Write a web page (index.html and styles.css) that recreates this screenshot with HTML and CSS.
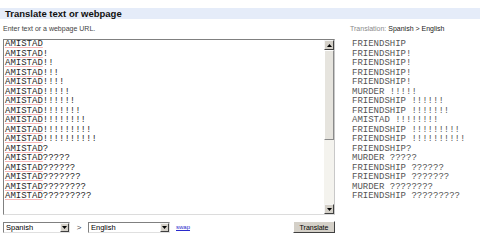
FILE: index.html
```html
<!DOCTYPE html>
<html>
<head>
  <title>Translate text or webpage</title>
  <link rel="stylesheet" href="styles.css">
</head>
<body>
  <div class="header">Translate text or webpage</div>

  <div class="main">
    <div class="source-col">
      <div class="hint">Enter text or a webpage URL.</div>

      <div class="source-box">
        <div class="source-text">
          <div><span class="misspelt">AMISTAD</span></div>
          <div><span class="misspelt">AMISTAD</span>!</div>
          <div><span class="misspelt">AMISTAD</span>!!</div>
          <div><span class="misspelt">AMISTAD</span>!!!</div>
          <div><span class="misspelt">AMISTAD</span>!!!!</div>
          <div><span class="misspelt">AMISTAD</span>!!!!!</div>
          <div><span class="misspelt">AMISTAD</span>!!!!!!</div>
          <div><span class="misspelt">AMISTAD</span>!!!!!!!</div>
          <div><span class="misspelt">AMISTAD</span>!!!!!!!!</div>
          <div><span class="misspelt">AMISTAD</span>!!!!!!!!!</div>
          <div><span class="misspelt">AMISTAD</span>!!!!!!!!!!</div>
          <div><span class="misspelt">AMISTAD</span>?</div>
          <div><span class="misspelt">AMISTAD</span>?????</div>
          <div><span class="misspelt">AMISTAD</span>??????</div>
          <div><span class="misspelt">AMISTAD</span>???????</div>
          <div><span class="misspelt">AMISTAD</span>????????</div>
          <div><span class="misspelt">AMISTAD</span>?????????</div>
        </div>
        <div class="scrollbar">
          <div class="scroll-btn">
            <svg width="5" height="3" viewBox="0 0 5 3"><path d="M2.5 0L5 3H0z" fill="#000"/></svg>
          </div>
          <div class="scroll-thumb"></div>
          <div class="scroll-track"></div>
          <div class="scroll-btn">
            <svg width="5" height="3" viewBox="0 0 5 3"><path d="M0 0H5L2.5 3z" fill="#000"/></svg>
          </div>
        </div>
      </div>

      <div class="controls">
        <div class="select select-from">
          <span class="select-value">Spanish</span>
          <span class="select-arrow">
            <svg width="5" height="3" viewBox="0 0 5 3"><path d="M0 0H5L2.5 3z" fill="#000"/></svg>
          </span>
        </div>
        <span class="arrow-sep">&gt;</span>
        <div class="select select-to">
          <span class="select-value">English</span>
          <span class="select-arrow">
            <svg width="5" height="3" viewBox="0 0 5 3"><path d="M0 0H5L2.5 3z" fill="#000"/></svg>
          </span>
        </div>
        <a class="swap" href="#">swap</a>
        <button class="translate-button">Translate</button>
      </div>
    </div>

    <div class="result-col">
      <div class="trans-label"><span class="muted">Translation:</span> Spanish &gt; English</div>
      <div class="result-text">
        <div>FRIENDSHIP</div>
        <div>FRIENDSHIP!</div>
        <div>FRIENDSHIP!</div>
        <div>FRIENDSHIP!</div>
        <div>FRIENDSHIP!</div>
        <div>MURDER !!!!!</div>
        <div>FRIENDSHIP !!!!!!</div>
        <div>FRIENDSHIP !!!!!!!</div>
        <div>AMISTAD !!!!!!!!</div>
        <div>FRIENDSHIP !!!!!!!!!</div>
        <div>FRIENDSHIP !!!!!!!!!!</div>
        <div>FRIENDSHIP?</div>
        <div>MURDER ?????</div>
        <div>FRIENDSHIP ??????</div>
        <div>FRIENDSHIP ???????</div>
        <div>MURDER ????????</div>
        <div>FRIENDSHIP ?????????</div>
      </div>
    </div>
  </div>
</body>
</html>
```

FILE: styles.css
```css
:root {
  --band: #e5ecf9;
  --text: #222222;
  --muted: #8a8a8a;
  --face: #d4d0c8;
  --mono: 'Liberation Mono', 'DejaVu Sans Mono', monospace;
  --font: 'Liberation Sans', Arial, sans-serif;
}

* {
  box-sizing: border-box;
  margin: 0;
  padding: 0;
}

body {
  width: 480px;
  height: 249px;
  overflow: hidden;
  background: #ffffff;
  font-family: var(--font);
  color: var(--text);
}

.header {
  margin-top: 8px;
  height: 11px;
  line-height: 11px;
  padding-left: 5px;
  background: var(--band);
  font-size: 9.5px;
  font-weight: 700;
  color: #111111;
}

.main {
  display: flex;
  align-items: flex-start;
}

.source-col {
  width: 332px;
  margin-left: 3px;
}

.hint,
.trans-label {
  margin-top: 6px;
  height: 8px;
  line-height: 8px;
  font-size: 7px;
  color: #444444;
  white-space: nowrap;
}

.trans-label {
  color: #222222;
}

.source-box {
  display: flex;
  margin-top: 6px;
  height: 176px;
  border: 1px solid #808080;
  border-right-color: #c8c8c8;
  border-bottom-color: #dcdcdc;
}

.source-text {
  flex: 1;
  padding-left: 1px;
  font-family: var(--mono);
  font-size: 9px;
  line-height: 9.5px;
  color: #2a2a2a;
}

.source-text div,
.result-text div {
  height: 9.5px;
  white-space: pre;
}

.misspelt {
  text-decoration: underline;
  text-decoration-color: #f6b8b8;
  text-underline-offset: 1px;
}

/* Classic scrollbar */
.scrollbar {
  display: flex;
  flex-direction: column;
  width: 10px;
  background: #f4f3ee;
}

.scroll-btn {
  display: flex;
  align-items: center;
  justify-content: center;
  height: 10px;
  background: var(--face);
  border: 1px solid;
  border-color: #f4f4f4 #404040 #404040 #f4f4f4;
}

.scroll-thumb {
  height: 90px;
  background: #e6e4de;
  border: 1px solid;
  border-color: #ffffff #8a8a8a #8a8a8a #ffffff;
}

.scroll-track {
  flex: 1;
}

.controls {
  display: flex;
  align-items: center;
  margin-top: 6px;
  height: 12px;
}

.select {
  display: flex;
  align-items: center;
  height: 11px;
  border: 1px solid;
  border-color: #808080 #e0e0e0 #e0e0e0 #808080;
  background: #ffffff;
}

.select-from {
  width: 67px;
}

.select-to {
  width: 82px;
}

.select-value {
  flex: 1;
  padding-left: 2px;
  font-size: 7.5px;
  line-height: 9px;
  color: #000000;
}

.select-arrow {
  display: flex;
  align-items: center;
  justify-content: center;
  width: 9px;
  height: 9px;
  background: var(--face);
  border: 1px solid;
  border-color: #f4f4f4 #404040 #404040 #f4f4f4;
}

.arrow-sep {
  width: 18px;
  text-align: center;
  font-size: 8px;
  color: #444444;
}

.swap {
  margin-left: 6px;
  font-size: 6px;
  color: #2a2acc;
}

.translate-button {
  margin-left: auto;
  width: 42px;
  height: 12px;
  background: var(--face);
  border: 1px solid;
  border-color: #ffffff #404040 #404040 #ffffff;
  font-family: var(--font);
  font-size: 7px;
  color: #000000;
}

.result-col {
  margin-left: 15px;
}

.result-text {
  margin-top: 7px;
  padding-left: 2px;
  font-family: var(--mono);
  font-size: 9px;
  line-height: 9.5px;
  color: #555555;
}

.muted {
  color: var(--muted);
}
```
